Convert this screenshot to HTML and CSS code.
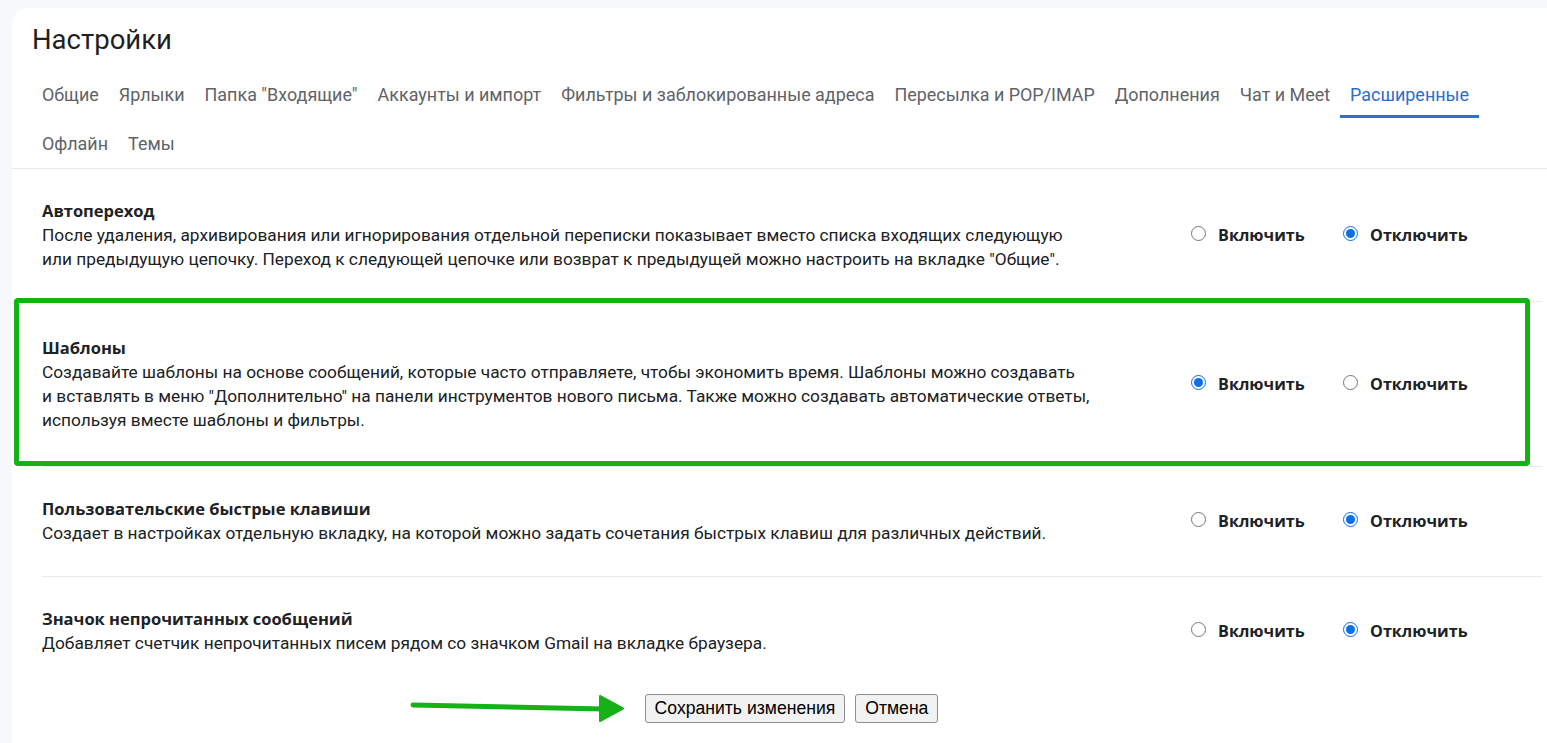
FILE: index.html
```html
<!DOCTYPE html>
<html lang="ru">
<head>
<meta charset="utf-8">
<title>Настройки</title>
<link rel="stylesheet" href="styles.css">
</head>
<body>
<div class="card">
  <h1 class="title">Настройки</h1>
  <nav class="tabs">
    <a class="tab">Общие</a>
    <a class="tab">Ярлыки</a>
    <a class="tab">Папка "Входящие"</a>
    <a class="tab">Аккаунты и импорт</a>
    <a class="tab">Фильтры и заблокированные адреса</a>
    <a class="tab">Пересылка и POP/IMAP</a>
    <a class="tab">Дополнения</a>
    <a class="tab">Чат и Meet</a>
    <a class="tab tab-active">Расширенные</a>
    <a class="tab">Офлайн</a>
    <a class="tab">Темы</a>
  </nav>
  <div class="settings">
    <div class="row">
      <div class="info">
        <div class="name">Автопереход</div>
        <div class="desc">После удаления, архивирования или игнорирования отдельной переписки показывает вместо списка входящих следующую<br>или предыдущую цепочку. Переход к следующей цепочке или возврат к предыдущей можно настроить на вкладке "Общие".</div>
      </div>
      <div class="options">
        <label class="option"><input type="radio" name="r1"><span>Включить</span></label>
        <label class="option"><input type="radio" name="r1" checked><span>Отключить</span></label>
      </div>
    </div>
    <div class="row row-tall">
      <div class="info">
        <div class="name">Шаблоны</div>
        <div class="desc">Создавайте шаблоны на основе сообщений, которые часто отправляете, чтобы экономить время. Шаблоны можно создавать<br>и вставлять в меню "Дополнительно" на панели инструментов нового письма. Также можно создавать автоматические ответы,<br>используя вместе шаблоны и фильтры.</div>
      </div>
      <div class="options">
        <label class="option"><input type="radio" name="r2" checked><span>Включить</span></label>
        <label class="option"><input type="radio" name="r2"><span>Отключить</span></label>
      </div>
    </div>
    <div class="row row-third">
      <div class="info">
        <div class="name">Пользовательские быстрые клавиши</div>
        <div class="desc">Создает в настройках отдельную вкладку, на которой можно задать сочетания быстрых клавиш для различных действий.</div>
      </div>
      <div class="options">
        <label class="option"><input type="radio" name="r3"><span>Включить</span></label>
        <label class="option"><input type="radio" name="r3" checked><span>Отключить</span></label>
      </div>
    </div>
    <div class="row row-last">
      <div class="info">
        <div class="name">Значок непрочитанных сообщений</div>
        <div class="desc">Добавляет счетчик непрочитанных писем рядом со значком Gmail на вкладке браузера.</div>
      </div>
      <div class="options">
        <label class="option"><input type="radio" name="r4"><span>Включить</span></label>
        <label class="option"><input type="radio" name="r4" checked><span>Отключить</span></label>
      </div>
    </div>
  </div>
  <div class="actions">
    <button class="btn">Сохранить изменения</button>
    <button class="btn">Отмена</button>
  </div>
  <div class="highlight"></div>
  <svg class="arrow" width="220" height="32" viewBox="0 0 220 32">
    <path d="M3 12 L195 16" stroke="#17b117" stroke-width="5" stroke-linecap="round" fill="none"/>
    <path d="M190 3 L213 15.5 L190 28 Z" fill="#17b117" stroke="#17b117" stroke-width="2" stroke-linejoin="round"/>
  </svg>
</div>
</body>
</html>
```
FILE: styles.css
```css
html, body {
  margin: 0;
  padding: 0;
  height: 100%;
  overflow: hidden;
}
body {
  background: #f6f8fc;
  font-family: Roboto, "Noto Sans", Arial, sans-serif;
  color: #202124;
}
.card {
  position: relative;
  margin: 8px 0 0 12px;
  background: #fff;
  border-top-left-radius: 16px;
  height: calc(100% - 8px);
}
.title {
  margin: 0;
  padding: 16px 20px 0;
  font-size: 27.5px;
  line-height: 32px;
  font-weight: 400;
  color: #1f1f1f;
}
.tabs {
  display: flex;
  flex-wrap: wrap;
  max-width: 1470px;
  margin-top: 14px;
  padding-left: 20px;
}
.tab {
  position: relative;
  display: block;
  padding: 0 10px;
  height: 49px;
  line-height: 49px;
  font-size: 17.95px;
  color: #5f6368;
  white-space: nowrap;
}
.tab-active {
  color: #2b6fcb;
}
.tab-active::after {
  content: "";
  position: absolute;
  left: 0;
  right: 0;
  bottom: 1px;
  height: 3px;
  background: #2f72c9;
}
.settings {
  border-top: 1px solid #e8eaed;
}
.row {
  display: grid;
  grid-template-columns: 1150px auto;
  align-items: center;
  margin: 0 5px 0 30px;
  padding: 30px 0;
  border-bottom: 1px solid #e8eaed;
}
.row-tall {
  padding: 34px 0;
}
.row-third {
  padding-bottom: 31px;
}
.row-last {
  border-bottom: none;
}
.info {
  max-width: 1060px;
}
.name {
  font-family: "Open Sans", Roboto, sans-serif;
  font-size: 16.5px;
  line-height: 24px;
  font-weight: 700;
  color: #202124;
}
.desc {
  font-size: 17.3px;
  line-height: 24px;
  color: #202124;
}
.options {
  display: flex;
}
.option {
  display: flex;
  align-items: center;
  width: 152px;
  font-family: "Open Sans", Roboto, sans-serif;
  font-size: 16.2px;
  font-weight: 700;
  color: #202124;
}
.option input {
  margin: 0 12px 4px -1px;
  width: 15px;
  height: 15px;
  accent-color: #0b6fe6;
}
.actions {
  display: flex;
  justify-content: center;
  gap: 10px;
  padding: 9px 0 0 24px;
}
.btn {
  font-family: "Liberation Sans", Arial, sans-serif;
  font-size: 17.6px;
  color: #000;
  background: #f2f2f2;
  border: 1px solid #8e8e8e;
  border-radius: 3px;
  height: 29px;
  padding: 0 9px;
}
.highlight {
  position: absolute;
  left: 2px;
  top: 290px;
  width: 1516px;
  height: 168px;
  box-sizing: border-box;
  border: 5px solid #14b214;
  border-radius: 4px;
  pointer-events: none;
}
.arrow {
  position: absolute;
  left: 398px;
  top: 685px;
}
```
